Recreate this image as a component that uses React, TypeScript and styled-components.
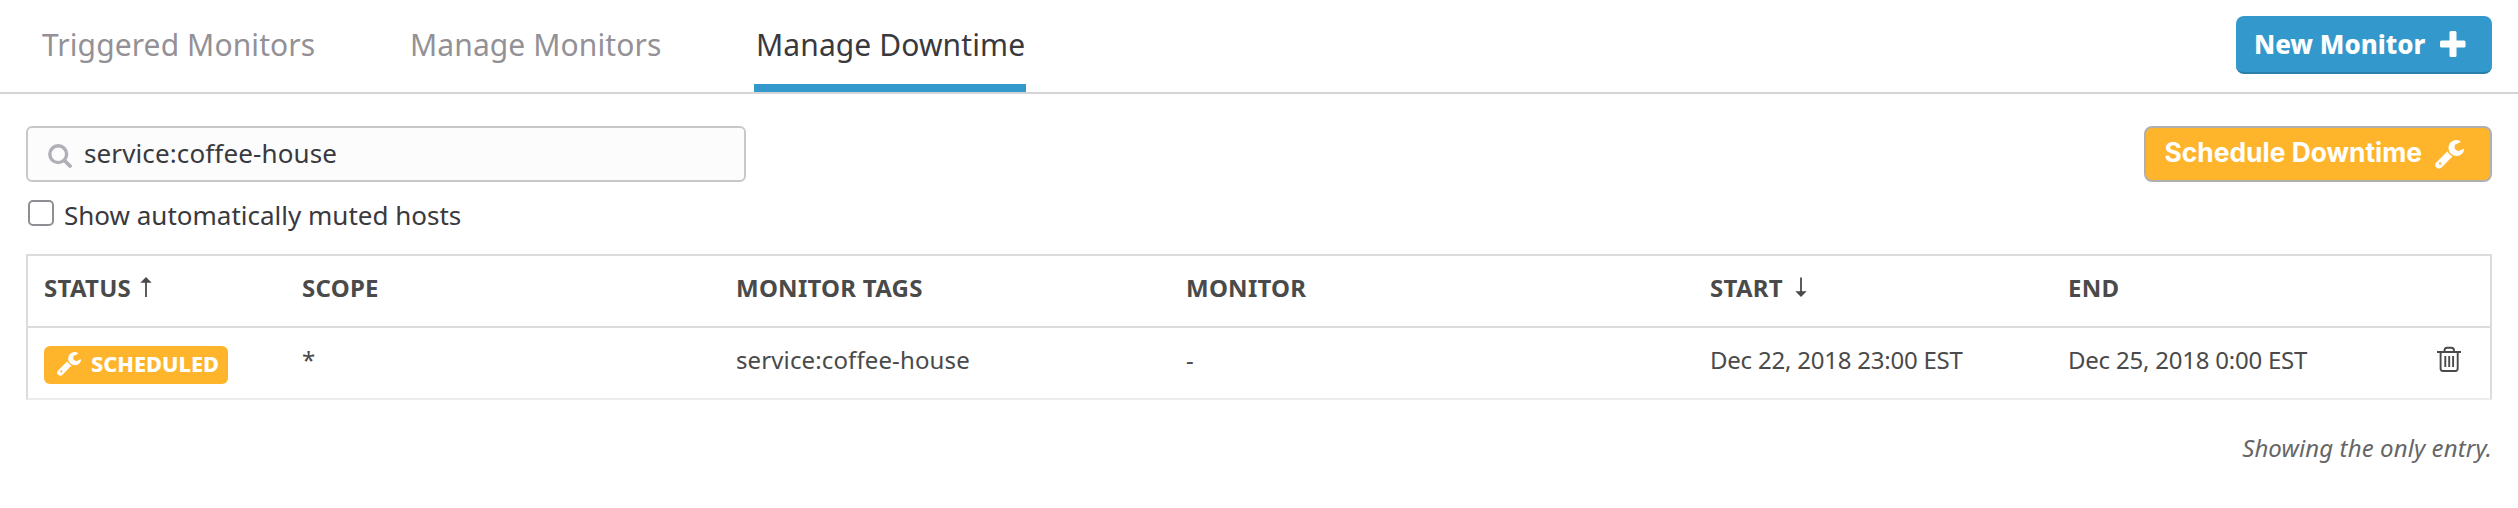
import React from "react";
import styled, { createGlobalStyle } from "styled-components";

const GlobalStyle = createGlobalStyle`
  * { box-sizing: border-box; }
  body {
    margin: 0;
    background: #fff;
    color: #39393e;
    font-family: "Noto Sans", "Open Sans", sans-serif;
    white-space: nowrap;
  }
`;

const Page = styled.div`
  width: 2518px;
  height: 508px;
  overflow: hidden;
`;

const Header = styled.header`
  display: flex;
  justify-content: space-between;
  height: 94px;
  padding: 0 26px 0 40px;
  border-bottom: 2px solid #d4d4d6;
`;

const Tabs = styled.nav`
  display: flex;
  gap: 92px;
`;

const Tab = styled.a<{ $active?: boolean; $width: number }>`
  width: ${(p) => p.$width}px;
  height: 92px;
  padding: 24px 0 0 2px;
  line-height: 42px;
  font-size: 30px;
  letter-spacing: 0.1px;
  color: ${(p) => (p.$active ? "#39393e" : "#939196")};
  border-bottom: 8px solid ${(p) => (p.$active ? "#3399cc" : "transparent")};
`;

const PrimaryButton = styled.button`
  display: flex;
  align-items: center;
  justify-content: space-between;
  width: 256px;
  height: 58px;
  margin-top: 16px;
  padding: 0 26px 1px 18px;
  border: 0;
  border-bottom: 2px solid #2b7fab;
  border-radius: 8px;
  background: #3399cc;
  color: #fff;
  font: 800 25.8px "Noto Sans", sans-serif;
`;

const WarningButton = styled.button`
  display: flex;
  align-items: center;
  justify-content: space-between;
  width: 348px;
  height: 56px;
  padding: 0 26px 4px 18.5px;
  border: 2px solid #b0b0b0;
  border-radius: 8px;
  background: #ffb52b;
  color: #fff;
  font: 700 26.4px Inter, sans-serif;

  svg { margin-top: 5px; }
`;

const Toolbar = styled.div`
  display: flex;
  justify-content: space-between;
  padding: 32px 26px 0;
`;

const SearchBox = styled.div`
  display: flex;
  align-items: center;
  gap: 12px;
  width: 720px;
  height: 56px;
  padding: 0 20px 2px;
  border: 2px solid #c8c8ca;
  border-radius: 6px;
  background: #fcfcfc;
  font-size: 26px;
  letter-spacing: 0.12px;

  svg { margin-top: 6px; }
`;

const CheckRow = styled.label`
  display: flex;
  height: 72px;
  padding: 16px 28px 0;
  gap: 10px;
  font-size: 26px;
  line-height: 34px;
`;

const CheckBox = styled.span`
  width: 26px;
  height: 26px;
  margin-top: 2px;
  border: 2px solid #908e94;
  border-radius: 5px;
  background: #fff;
`;

const Table = styled.div`
  width: 2466px;
  margin-left: 26px;
  border: 2px solid #dcdcdc;
  border-bottom-color: #ececec;
  color: #4a4a4a;
`;

const Row = styled.div<{ $head?: boolean }>`
  display: grid;
  grid-template-columns: 258px 434px 450px 524px 358px 369px 24px;
  height: ${(p) => (p.$head ? 72 : 70)}px;
  padding-left: 16px;
  line-height: 34px;
  font-size: 24px;
  font-weight: ${(p) => (p.$head ? 700 : 400)};
  letter-spacing: ${(p) => (p.$head ? 0.25 : 0.12)}px;
  border-bottom: ${(p) => (p.$head ? "2px solid #dcdcdc" : "0")};
`;

const Cell = styled.div<{ $tight?: boolean }>`
  display: flex;
  padding-top: 15px;
  letter-spacing: ${(p) => (p.$tight ? "-0.22px" : "inherit")};
`;

const Badge = styled.span`
  display: flex;
  align-items: center;
  gap: 10px;
  width: 184px;
  height: 38px;
  margin-top: 3px;
  padding: 0 0 3px 13px;
  border-radius: 6px;
  background: #ffb52b;
  color: #fff;
  font-size: 21.8px;
  font-weight: 800;
  letter-spacing: 0;
`;

const Footer = styled.footer`
  padding: 31px 26px 0;
  text-align: right;
  font-size: 24px;
  line-height: 34px;
  letter-spacing: 0.1px;
  font-style: italic;
  color: #666;
`;

const SortIcon = styled.svg<{ $gap: number }>`
  margin-left: ${(p) => p.$gap}px;
  margin-top: 6px;
`;

const Wrench = ({ size }: { size: number }) => (
  <svg width={size} height={size} viewBox="0 0 29 29" fill="#fff">
    <path
      fillRule="evenodd"
      d="M17.6 16.2 6.6 27.5C5.300 28.900 3.100 29 1.700 27.700L1 27C-.2 25.800-.2 24 1 22.700L12.500 11.300C13.300 13.500 15.300 15.500 17.600 16.200ZM5.200 22.200A1.250 1.250 0 1 0 5.200 24.700 1.250 1.250 0 1 0 5.200 22.200Z"
    />
    <path d="M25.700 2 19.900 4.700 19.600 8.800 23.200 11.300 28.700 8.700C29.500 9.600 28.600 12 27.200 13.600 25 16 21.400 16.700 18.300 15.200 15.600 13.900 13.500 11.200 13.500 8.200 13.500 3.600 17 0 21.400 0 23.500 0 25.200.7 25.700 2Z" />
  </svg>
);

const Plus = () => (
  <svg width="26" height="26" viewBox="0 0 26 26" fill="#fff">
    <path d="M11 0h4q1.500 0 1.500 1.500v8h7.500q1.500 0 1.500 1.500v4q0 1.500-1.500 1.500h-7.500v8q0 1.500-1.500 1.500h-4q-1.500 0-1.500-1.500v-8h-8Q0 16.500 0 15v-4q0-1.500 1.500-1.500h8v-8Q9.500 0 11 0Z" />
  </svg>
);

const Search = () => (
  <svg width="24" height="24" viewBox="0 0 24 24" fill="none" stroke="#b0aeb6">
    <circle cx="10.200" cy="10.200" r="8.400" strokeWidth="3.400" />
    <path d="M16.500 16.500 22 22" strokeWidth="3.800" strokeLinecap="round" />
  </svg>
);

const TrashIcon = styled.svg`
  margin-top: 3px;
`;

const Trash = () => (
  <TrashIcon width="24" height="27" viewBox="0 0 24 27" fill="none" stroke="#4a4a4a" strokeWidth="1.900">
    <path d="M0 6H24M3.600 6V22.500Q3.600 25 6 25H18.200Q20.700 25 20.700 22.500V6" />
    <path d="M7.500 5.500V4.500Q7.500 1.800 10 1.800H14.300Q17 1.800 17 4.500V5.500M8.300 10V21M12.200 10V21M16.100 10V21" />
  </TrashIcon>
);

export default function App() {
  return (
    <Page>
      <GlobalStyle />
      <Header>
        <Tabs>
          <Tab $width={276}>Triggered Monitors</Tab>
          <Tab $width={254}>Manage Monitors</Tab>
          <Tab $width={272} $active>Manage Downtime</Tab>
        </Tabs>
        <PrimaryButton>
          New Monitor <Plus />
        </PrimaryButton>
      </Header>
      <Toolbar>
        <SearchBox>
          <Search />
          service:coffee-house
        </SearchBox>
        <WarningButton>
          Schedule Downtime <Wrench size={29} />
        </WarningButton>
      </Toolbar>
      <CheckRow>
        <CheckBox />
        Show automatically muted hosts
      </CheckRow>
      <Table>
        <Row $head>
          <Cell>
            STATUS
            <SortIcon $gap={9} width="12" height="20" viewBox="0 0 12 20" fill="#4a4a4a">
              <path d="M6 0 11.700 5.800H6.900V20H5.100V5.800H.3Z" />
            </SortIcon>
          </Cell>
          <Cell>SCOPE</Cell>
          <Cell>MONITOR TAGS</Cell>
          <Cell>MONITOR</Cell>
          <Cell>
            START
            <SortIcon $gap={12.5} width="12" height="20" viewBox="0 0 12 20" fill="#4a4a4a">
              <path d="M6 20 11.700 14.200H6.900V.5H5.100V14.200H.3Z" />
            </SortIcon>
          </Cell>
          <Cell>END</Cell>
          <Cell />
        </Row>
        <Row>
          <Cell>
            <Badge>
              <Wrench size={24} />
              SCHEDULED
            </Badge>
          </Cell>
          <Cell>*</Cell>
          <Cell>service:coffee-house</Cell>
          <Cell>-</Cell>
          <Cell $tight>Dec 22, 2018 23:00 EST</Cell>
          <Cell $tight>Dec 25, 2018 0:00 EST</Cell>
          <Cell>
            <Trash />
          </Cell>
        </Row>
      </Table>
      <Footer>Showing the only entry.</Footer>
    </Page>
  );
}
